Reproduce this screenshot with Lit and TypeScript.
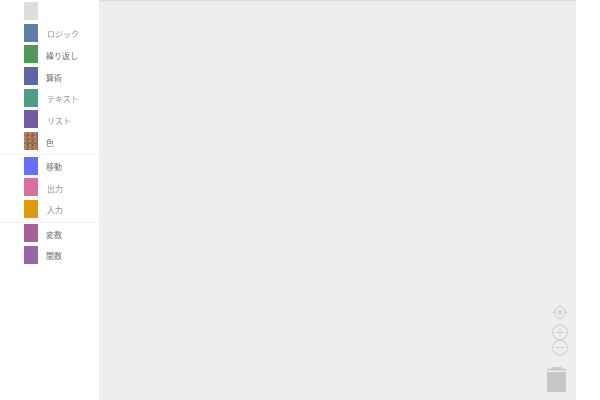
import { LitElement, html, css, svg } from 'lit';
import { customElement } from 'lit/decorators.js';

type Category = { label: string; color: string; dim?: boolean; textured?: boolean };

// Groups are split by a thin rule in the toolbox.
const GROUPS: Category[][] = [
  [
    { label: '', color: '#dddddd' },
    { label: 'ロジック', color: '#5b80a5', dim: true },
    { label: '繰り返し', color: '#4f9a5a' },
    { label: '算術', color: '#5b67a5' },
    { label: 'テキスト', color: '#4f9c88', dim: true },
    { label: 'リスト', color: '#745ba5', dim: true },
    { label: '色', color: '#a5745b', textured: true },
  ],
  [
    { label: '移動', color: '#6a6cff' },
    { label: '出力', color: '#d9709d', dim: true },
    { label: '入力', color: '#dd9a0c', dim: true },
  ],
  [
    { label: '変数', color: '#a8609a' },
    { label: '関数', color: '#9a64a8' },
  ],
];

@customElement('app-root')
export class AppRoot extends LitElement {
  static styles = css`
    :host {
      display: flex;
      width: 600px;
      height: 400px;
      background: #fff;
      font-family: 'Noto Sans CJK JP', 'Noto Sans', sans-serif;
      overflow: hidden;
    }

    .toolbox {
      width: 99px;
      flex-shrink: 0;
      box-sizing: border-box;
      padding-top: 2px;
    }

    .group {
      margin-bottom: 1.7px;
      border-bottom: 1px solid #f3f3f3;
    }

    .group:last-child {
      border-bottom: none;
    }

    .row {
      display: flex;
      align-items: flex-start;
      height: 21.7px;
      padding-left: 24px;
      box-sizing: border-box;
    }

    .tile {
      width: 14px;
      height: 18px;
      flex-shrink: 0;
    }

    .tile.textured {
      background-image: radial-gradient(circle at 1px 1px, #b98a64 1px, transparent 1.3px),
        radial-gradient(circle at 4px 3px, #8a5d40 1px, transparent 1.3px),
        radial-gradient(circle at 2px 5px, #94694a 0.8px, transparent 1.1px);
      background-size: 5px 4px, 5px 5px, 3px 6px;
    }

    /* will-change puts labels on their own layer, so text gets grey antialiasing */
    .label {
      margin-left: 8px;
      margin-top: 1.5px;
      font-size: 8px;
      line-height: 18px;
      color: #666;
      white-space: nowrap;
      will-change: opacity;
      opacity: 0.95;
    }

    .label.dim {
      color: #8a8a8a;
      margin-left: 9px;
    }

    .workspace {
      position: relative;
      width: 477px;
      flex-shrink: 0;
      background: #eeeeee;
      border-top: 1px solid #dcdcdc;
      box-sizing: border-box;
    }

    .controls {
      position: absolute;
      left: 451px;
      top: 304px;
      width: 20px;
      height: 90px;
      display: block;
      overflow: visible;
    }
  `;

  private renderControls() {
    return svg`
      <g fill="none" stroke="#d2d2d2" stroke-width="1.2">
        <circle cx="10" cy="7.500" r="5.500" />
        <path d="M10 0v3M10 12v3M2.500 7.500h3M14.500 7.500h3" />
        <circle cx="10" cy="27.500" r="7.300" />
        <path d="M5.500 27.500h9M10 23v9" />
        <circle cx="10" cy="42.500" r="7.300" />
        <path d="M5.500 42.500h9" />
      </g>
      <circle cx="10" cy="7.500" r="2.200" fill="#d2d2d2" />
      <path d="M-3.500 65.500h20v-1.500l-5-.6v-1.400h-9v1.400l-6 .6z" fill="#c8c8c8" />
      <rect x="-3" y="67" width="19" height="20" fill="#c6c6c6" />
    `;
  }

  render() {
    return html`
      <nav class="toolbox">
        ${GROUPS.map(
          (group) => html`
            <div class="group">
              ${group.map(
                (cat) => html`
                  <div class="row">
                    <div class="tile ${cat.textured ? 'textured' : ''}" style="background-color:${cat.color}"></div>
                    <span class="label ${cat.dim ? 'dim' : ''}">${cat.label}</span>
                  </div>
                `,
              )}
            </div>
          `,
        )}
      </nav>
      <main class="workspace">
        <svg class="controls" viewBox="0 0 20 90">${this.renderControls()}</svg>
      </main>
    `;
  }
}
